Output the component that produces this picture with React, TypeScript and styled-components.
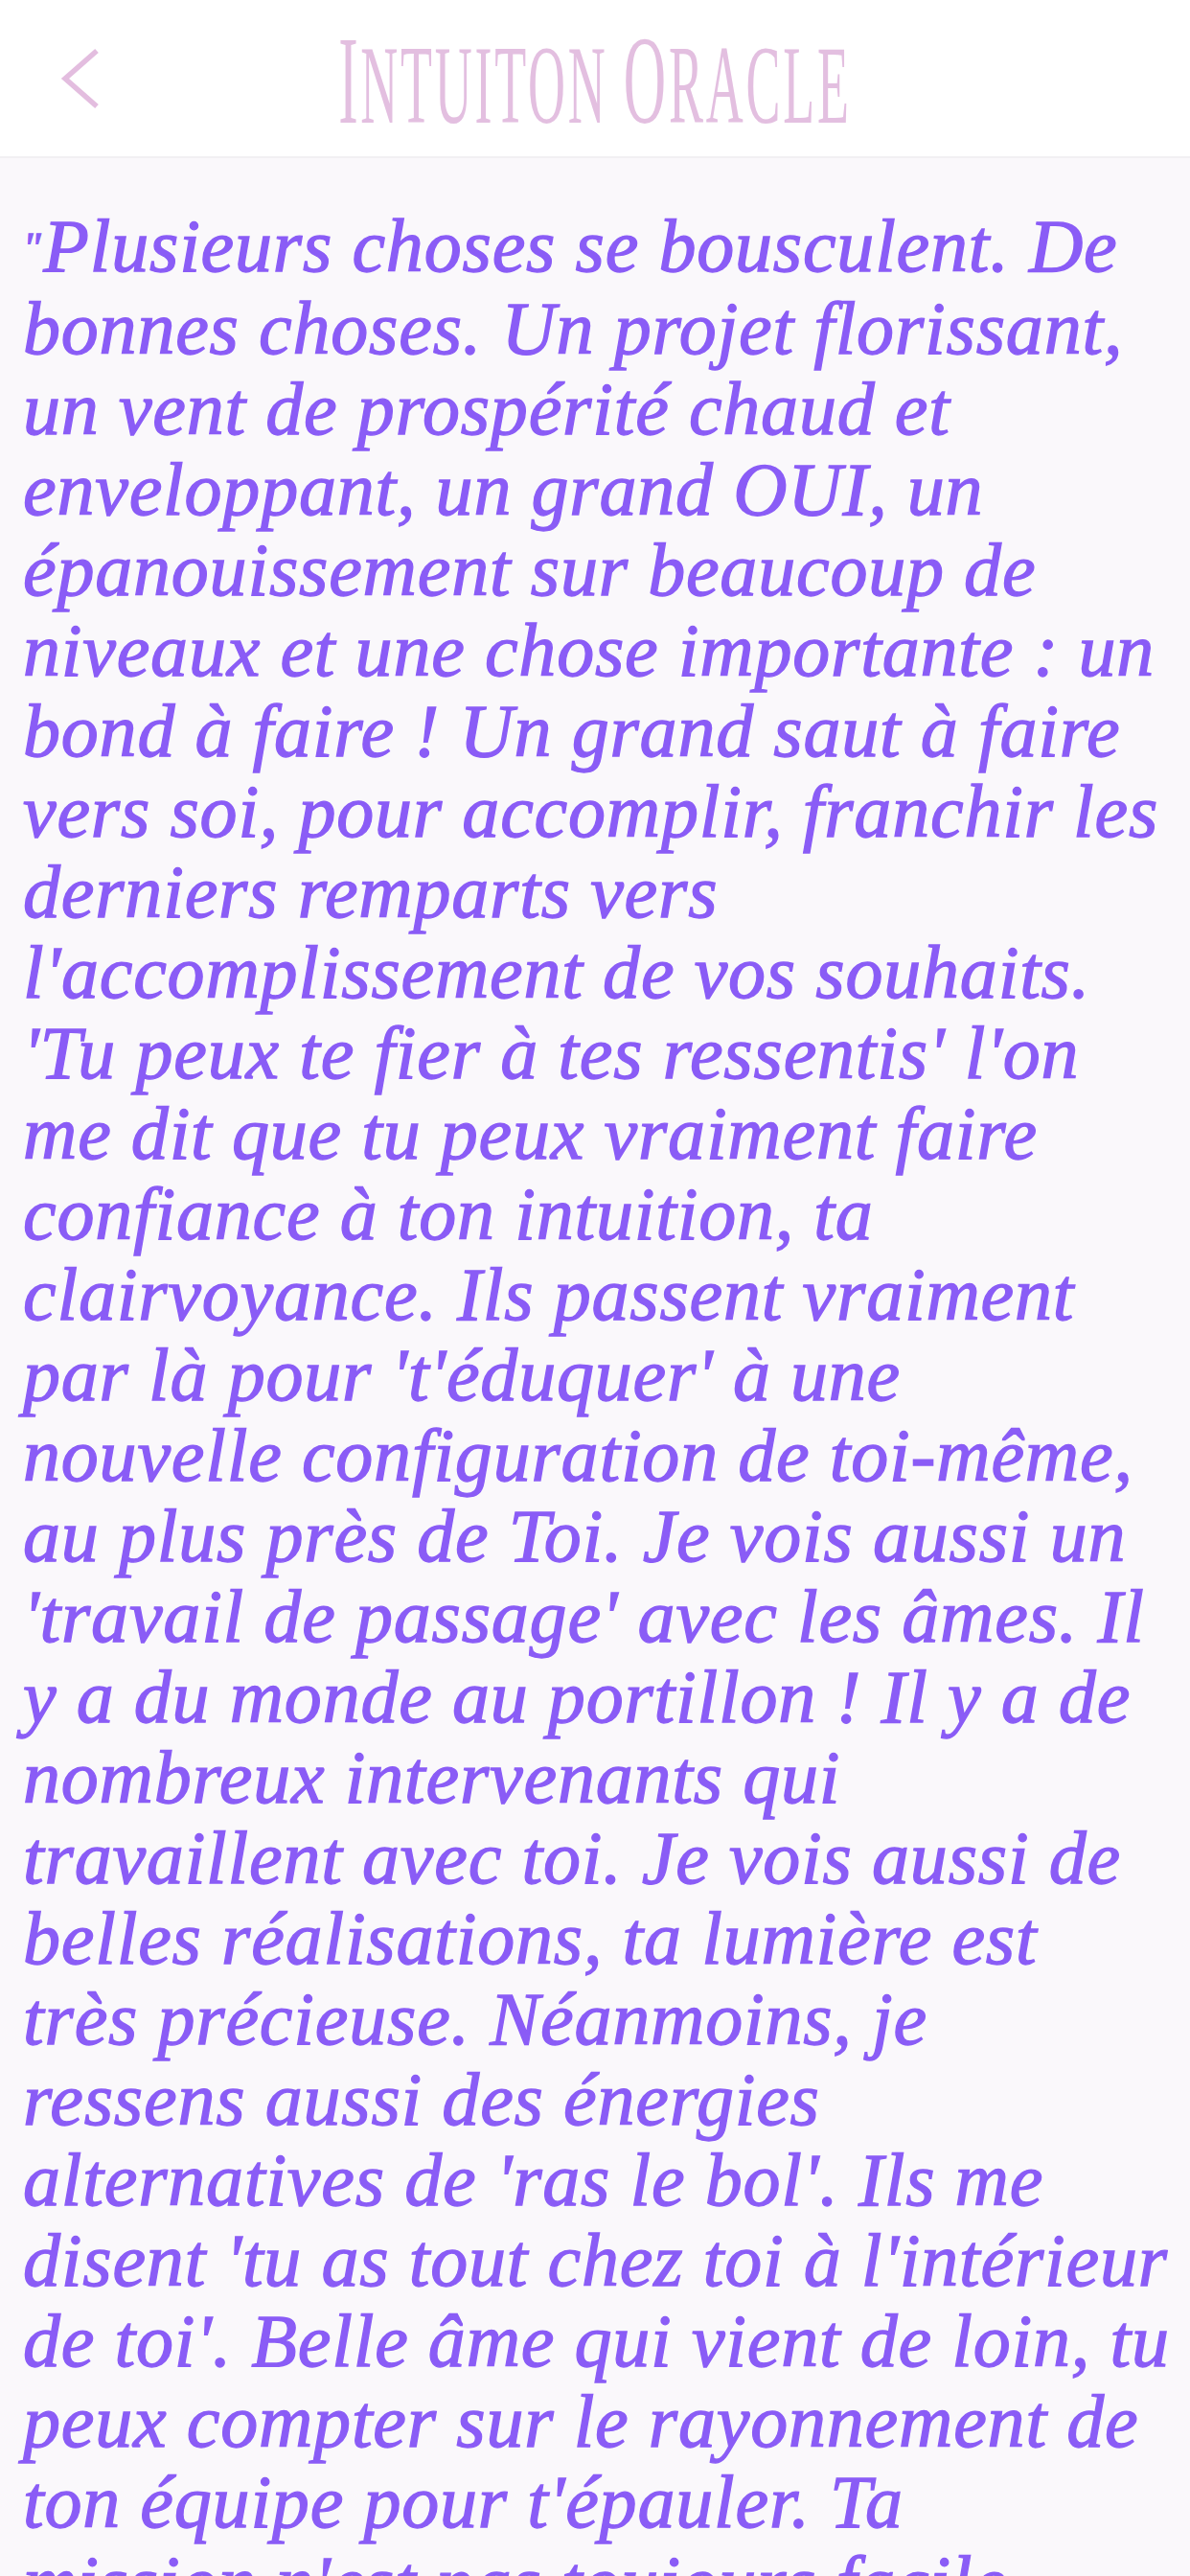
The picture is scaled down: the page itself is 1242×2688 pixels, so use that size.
import React from "react";
import styled, { createGlobalStyle } from "styled-components";

const Global = createGlobalStyle`
  html, body { margin: 0; padding: 0; background: #faf8fb; }
  body { width: 1242px; overflow: hidden; }
`;

const Page = styled.div`
  width: 1242px;
  min-height: 2688px;
  background: #faf8fb;
  display: flex;
  flex-direction: column;
`;

const Header = styled.header`
  height: 163px;
  background: #ffffff;
  border-bottom: 2px solid #f2f0f3;
  display: grid;
  grid-template-columns: 180px minmax(0, 1fr) 180px;
  align-items: center;
`;

const BackButton = styled.button`
  border: 0;
  background: transparent;
  padding: 0 0 0 62px;
  height: 100%;
  display: flex;
  align-items: center;
  justify-content: flex-start;
  cursor: pointer;
`;

const TitleWrap = styled.div`
  display: flex;
  justify-content: center;
  align-items: center;
  min-width: 0;
  overflow: visible;
`;

const Title = styled.h1`
  margin: 4px 0 0 0;
  flex: none;
  display: inline-block;
  white-space: nowrap;
  font-family: "Liberation Serif", "DejaVu Serif", serif;
  font-weight: 400;
  font-size: 116px;
  line-height: 1;
  color: #e3bfe0;
  letter-spacing: 6px;
  transform: scaleX(0.465);
  transform-origin: center;
`;

const Initial = styled.span`
  font-size: 132px;
`;

const Body = styled.main`
  padding: 50px 24px 0 24px;
`;

const Reading = styled.p`
  margin: 0;
  font-family: "Liberation Serif", "DejaVu Serif", serif;
  font-style: italic;
  font-size: 78px;
  line-height: 84px;
  letter-spacing: 0.8px;
  color: #8a5cf6;
  -webkit-text-stroke: 1.3px #8a5cf6;
  white-space: nowrap;
`;

const OpenQuote = styled.span`
  font-size: 44px;
  vertical-align: 10px;
  margin-right: 2px;
`;

const lines = [
  "Plusieurs choses se bousculent. De",
  "bonnes choses. Un projet florissant,",
  "un vent de prospérité chaud et",
  "enveloppant, un grand OUI, un",
  "épanouissement sur beaucoup de",
  "niveaux et une chose importante : un",
  "bond à faire ! Un grand saut à faire",
  "vers soi, pour accomplir, franchir les",
  "derniers remparts vers",
  "l'accomplissement de vos souhaits.",
  "'Tu peux te fier à tes ressentis' l'on",
  "me dit que tu peux vraiment faire",
  "confiance à ton intuition, ta",
  "clairvoyance. Ils passent vraiment",
  "par là pour 't'éduquer' à une",
  "nouvelle configuration de toi-même,",
  "au plus près de Toi. Je vois aussi un",
  "'travail de passage' avec les âmes. Il",
  "y a du monde au portillon ! Il y a de",
  "nombreux intervenants qui",
  "travaillent avec toi. Je vois aussi de",
  "belles réalisations, ta lumière est",
  "très précieuse. Néanmoins, je",
  "ressens aussi des énergies",
  "alternatives de 'ras le bol'. Ils me",
  "disent 'tu as tout chez toi à l'intérieur",
  "de toi'. Belle âme qui vient de loin, tu",
  "peux compter sur le rayonnement de",
  "ton équipe pour t'épauler. Ta",
  "mission n'est pas toujours facile...",
];

function Chevron() {
  return (
    <svg width="44" height="66" viewBox="0 0 44 66" aria-hidden="true">
      <path
        d="M39 4 L6 33 L39 62"
        fill="none"
        stroke="#e3bddf"
        strokeWidth="5.5"
        strokeLinecap="butt"
        strokeLinejoin="miter"
      />
    </svg>
  );
}

export default function App() {
  return (
    <>
      <Global />
      <Page>
        <Header>
          <BackButton aria-label="Retour">
            <Chevron />
          </BackButton>
          <TitleWrap>
            <Title>
              <Initial>I</Initial>NTUITON <Initial>O</Initial>RACLE
            </Title>
          </TitleWrap>
          <div />
        </Header>
        <Body>
          <Reading>
            <OpenQuote>"</OpenQuote>
            {lines.map((l, i) => (
              <React.Fragment key={i}>
                {l}
                {i < lines.length - 1 && <br />}
              </React.Fragment>
            ))}
          </Reading>
        </Body>
      </Page>
    </>
  );
}
